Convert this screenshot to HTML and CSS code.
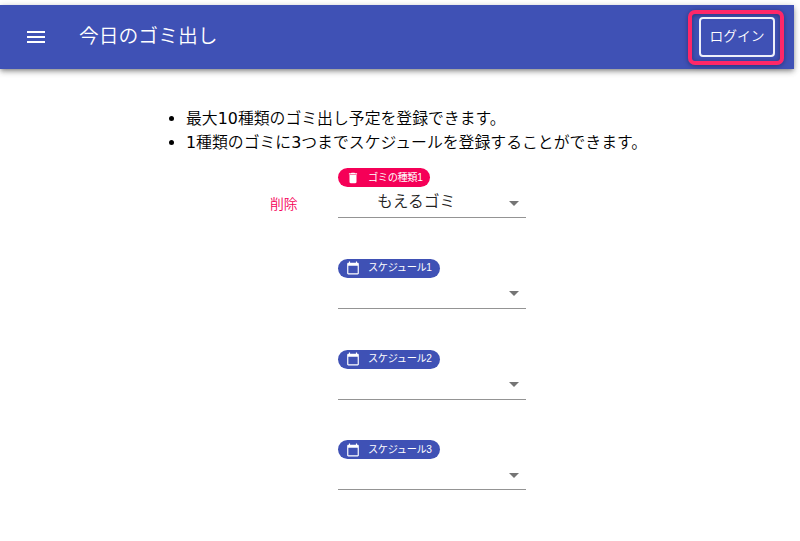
FILE: index.html
```html
<!DOCTYPE html>
<html lang="ja">
<head>
<meta charset="utf-8">
<title>今日のゴミ出し</title>
<link rel="stylesheet" href="styles.css">
</head>
<body>
<header class="bar">
  <svg class="menu" viewBox="0 0 24 24"><path d="M3 18h18v-2H3v2zm0-5h18v-2H3v2zm0-7v2h18V6H3z"/></svg>
  <h1 class="title">今日のゴミ出し</h1>
  <div class="highlight"><button class="login">ログイン</button></div>
</header>
<main>
  <ul class="notes">
    <li>最大<span class="num">10</span>種類のゴミ出し予定を登録できます。</li>
    <li><span class="num">1</span>種類のゴミに<span class="num">3</span>つまでスケジュールを登録することができます。</li>
  </ul>
  <div class="form">
    <button class="delete">削除</button>
    <div class="fields">
      <div class="field">
        <span class="chip trash"><svg viewBox="0 0 24 24"><path d="M6 19c0 1.1.9 2 2 2h8c1.1 0 2-.9 2-2V7H6v12zM19 4h-3.500l-1-1h-5l-1 1H5v2h14V4z"/></svg><span>ゴミの種類1</span></span>
        <div class="select"><span>もえるゴミ</span><i class="arrow"></i></div>
      </div>
      <div class="field">
        <span class="chip"><svg viewBox="0 0 24 24"><path d="M20 3h-1V1h-2v2H7V1H5v2H4c-1.100 0-2 .9-2 2v16c0 1.100.9 2 2 2h16c1.100 0 2-.9 2-2V5c0-1.100-.9-2-2-2zm0 18H4V8h16v13z"/></svg><span>スケジュール1</span></span>
        <div class="select"><span></span><i class="arrow"></i></div>
      </div>
      <div class="field">
        <span class="chip"><svg viewBox="0 0 24 24"><path d="M20 3h-1V1h-2v2H7V1H5v2H4c-1.100 0-2 .9-2 2v16c0 1.100.9 2 2 2h16c1.100 0 2-.9 2-2V5c0-1.100-.9-2-2-2zm0 18H4V8h16v13z"/></svg><span>スケジュール2</span></span>
        <div class="select"><span></span><i class="arrow"></i></div>
      </div>
      <div class="field">
        <span class="chip"><svg viewBox="0 0 24 24"><path d="M20 3h-1V1h-2v2H7V1H5v2H4c-1.100 0-2 .9-2 2v16c0 1.100.9 2 2 2h16c1.100 0 2-.9 2-2V5c0-1.100-.9-2-2-2zm0 18H4V8h16v13z"/></svg><span>スケジュール3</span></span>
        <div class="select"><span></span><i class="arrow"></i></div>
      </div>
    </div>
  </div>
</main>
</body>
</html>
```
FILE: styles.css
```css
* { box-sizing: border-box; }
body {
  margin: 0;
  padding-top: 5px;
  background: #fff;
  color: #000;
  font-family: "DejaVu Sans", "Noto Sans CJK JP", sans-serif;
  height: 541px;
  overflow: hidden;
}
button { margin: 0; padding: 0; background: none; border: 0; font-family: inherit; }
.bar {
  width: 794px;
  height: 64px;
  padding: 0 10px 0 24px;
  display: flex;
  align-items: center;
  background: #3f51b5;
  color: #fff;
  box-shadow: 0 2px 4px -1px rgba(0,0,0,.3), 0 3px 6px rgba(0,0,0,.2), 0 1px 8px rgba(0,0,0,.12);
}
.menu { width: 24px; height: 24px; fill: #fff; }
.title {
  flex: 1;
  margin: 0 0 0 31px;
  font-size: 19.800px;
  line-height: 30px;
  font-weight: 350;
}
.highlight {
  width: 96px;
  height: 55px;
  padding: 5px 7px;
  border: 4px solid #ff2768;
  border-radius: 7px;
  box-shadow: 0 1px 5px rgba(0,0,0,.35), inset 0 1px 5px rgba(0,0,0,.35);
}
.login {
  display: block;
  width: 76px;
  height: 40px;
  margin-top: -2px;
  border: 2px solid #eef0fa;
  border-radius: 4px;
  color: #fff;
  font-size: 13.800px;
  font-weight: 350;
  line-height: 34px;
  padding-bottom: 2px;
}
.notes {
  margin: 38px 0 0;
  padding: 0 0 0 186px;
  font-size: 15.85px;
  line-height: 24px;
  font-weight: 350;
}
.num { font-weight: 400; }
.form { display: flex; padding: 13px 0 0 270px; }
.delete {
  width: 68px;
  height: 20px;
  margin-top: 26px;
  text-align: left;
  color: #f50057;
  font-size: 13.8px;
  font-weight: 350;
  line-height: 20px;
}
.fields { width: 188px; }
.field { height: 90.800px; }
.chip {
  display: flex;
  align-items: center;
  width: 102px;
  height: 19px;
  padding-left: 8px;
  border-radius: 10px;
  background: #3f51b5;
  color: #fff;
  font-family: "Liberation Sans", "Noto Sans CJK JP", sans-serif;
  font-size: 10.200px;
  letter-spacing: -0.35px;
  line-height: 18px;
  white-space: nowrap;
}
.chip svg { width: 14px; height: 14px; margin-right: 8px; fill: #fff; }
.chip.trash { width: 92px; background: #f50057; }
.select {
  display: flex;
  align-items: center;
  height: 31px;
  padding-right: 7px;
  border-bottom: 1px solid #949494;
}
.select span {
  flex: 1;
  padding-left: 39px;
  font-size: 15.75px;
  font-weight: 350;
  line-height: 28px;
  color: #222;
}
.arrow {
  border: 5px solid transparent;
  border-top-color: #757575;
  border-bottom: 0;
  margin-top: 2px;
}
```
